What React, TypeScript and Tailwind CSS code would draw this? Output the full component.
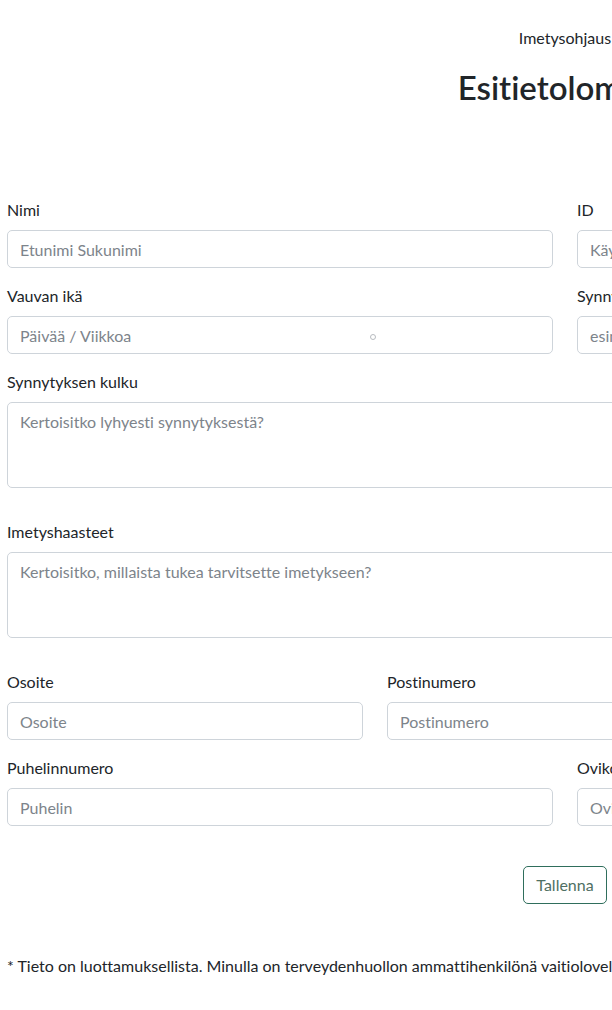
const inputCls =
  "block w-full h-[38px] rounded-[5px] border border-[#ced4da] bg-white px-3 text-[16px] text-[#212529] placeholder:text-[#7d848b] outline-none";

function Field({ label, placeholder, className }: { label: string; placeholder: string; className: string }) {
  return (
    <div className={className}>
      <label className="block mb-2 leading-6 text-[16px] text-[#212529]">{label}</label>
      <input className={inputCls} placeholder={placeholder} />
    </div>
  );
}

function Area({ label, placeholder }: { label: string; placeholder: string }) {
  return (
    <div className="col-span-12 mb-8">
      <label className="block mb-2 leading-6 text-[16px] text-[#212529]">{label}</label>
      <textarea
        className="block w-full h-[86px] rounded-[5px] border border-[#ced4da] bg-white px-3 py-[7px] text-[16px] leading-6 text-[#212529] placeholder:text-[#7d848b] outline-none resize-none"
        placeholder={placeholder}
      />
    </div>
  );
}

export default function App() {
  return (
    <div className="w-full overflow-hidden bg-white font-['Lato','Liberation_Sans',sans-serif] text-[#212529] [font-variant-ligatures:none]">
      <div className="w-[1116px] ml-[7px]">
        <div className="pt-[26px] text-center">
          <p className="leading-6 text-[16px]">Imetysohjaus</p>
          <h1 className="mt-[13px] text-[33px] leading-[48px] font-semibold">Esitietolomake</h1>
        </div>

        <form className="mt-[87px] grid grid-cols-12 gap-x-6">
          <Field className="col-span-6 mb-4" label="Nimi" placeholder="Etunimi Sukunimi" />
          <Field className="col-span-6 mb-4" label="ID" placeholder="Käyttäjätunnus" />
          <div className="col-span-6 mb-4 relative">
            <label className="block mb-2 leading-6 text-[16px]">Vauvan ikä</label>
            <input className={inputCls} placeholder="Päivää / Viikkoa" />
            <span className="absolute left-[363px] top-[50px] w-[6px] h-[6px] rounded-full border border-[#b8bcc0]" />
          </div>
          <Field className="col-span-6 mb-4" label="Synnytyspäivä" placeholder="esim. 1.1.2024" />
          <Area label="Synnytyksen kulku" placeholder="Kertoisitko lyhyesti synnytyksestä?" />
          <Area label="Imetyshaasteet" placeholder="Kertoisitko, millaista tukea tarvitsette imetykseen?" />
          <Field className="col-span-4 mb-4" label="Osoite" placeholder="Osoite" />
          <Field className="col-span-4 mb-4" label="Postinumero" placeholder="Postinumero" />
          <Field className="col-span-4 mb-4" label="Postitoimipaikka" placeholder="Postitoimipaikka" />
          <Field className="col-span-6 mb-4" label="Puhelinnumero" placeholder="Puhelin" />
          <Field className="col-span-6 mb-4" label="Ovikoodi" placeholder="Ovikoodi" />
          <div className="col-span-12 flex justify-center mt-6">
            <button
              type="button"
              className="h-[38px] px-3 rounded-[5px] border border-[#2f6e5c] bg-white text-[16px] text-[#4f6f63]"
            >
              Tallenna
            </button>
          </div>
        </form>

        <p className="mt-[50px] pb-10 leading-6 text-[16px]">
          * Tieto on luottamuksellista. Minulla on terveydenhuollon ammattihenkilönä vaitiolovelvollisuus.
        </p>
      </div>
    </div>
  );
}
